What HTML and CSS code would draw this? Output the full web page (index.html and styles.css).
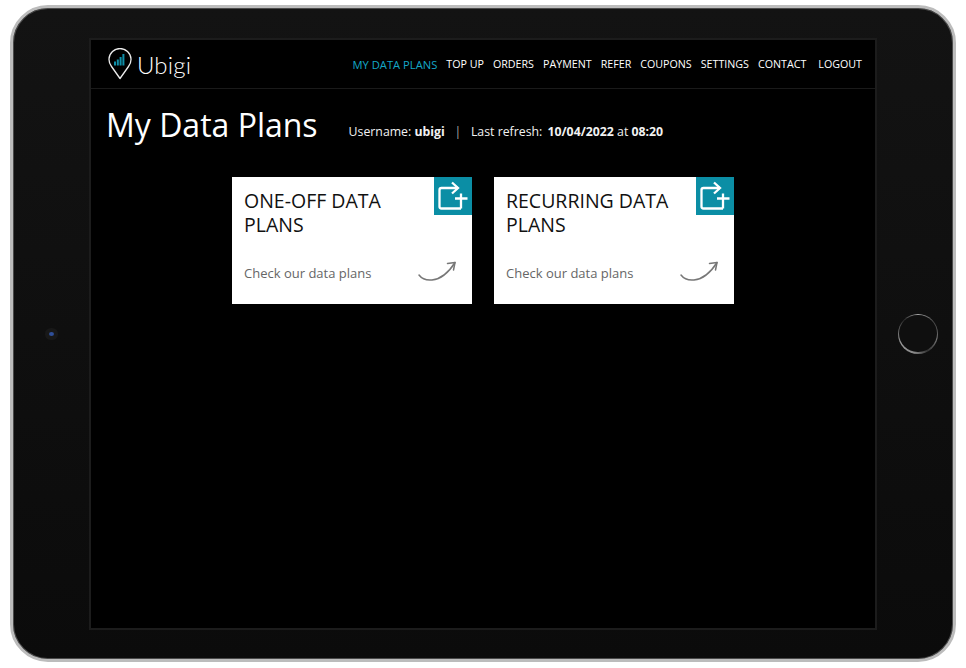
FILE: index.html
```html
<!DOCTYPE html>
<html lang="en">
<head>
  <meta charset="UTF-8" />
  <meta name="viewport" content="width=device-width, initial-scale=1.0" />
  <title>Ubigi - My Data Plans</title>
  <link rel="stylesheet" href="styles.css">
</head>
<body>
  <div class="tablet">
    <div class="bezel bezel-left">
      <div class="camera"></div>
    </div>

    <div class="screen">
      <header>
        <div class="logo">
          <svg class="logo-pin" width="24" height="32" viewBox="0 0 24 32">
            <path d="M12 30.500 L3.500 18.500 A11 11 0 1 1 20.500 18.500 Z" fill="none" stroke="#ececec" stroke-width="1.300" stroke-linejoin="round"/>
            <rect class="bar" x="6" y="13.500" width="2" height="4"/>
            <rect class="bar" x="8.800" y="11.500" width="2" height="6"/>
            <rect class="bar" x="11.600" y="9" width="2" height="8.500"/>
            <rect class="bar" x="14.400" y="6" width="2" height="11.500"/>
          </svg>
          <span class="logo-text">Ubigi</span>
        </div>
        <nav>
          <a class="active" href="#">MY DATA PLANS</a>
          <a href="#">TOP UP</a>
          <a href="#">ORDERS</a>
          <a href="#">PAYMENT</a>
          <a href="#">REFER</a>
          <a href="#">COUPONS</a>
          <a href="#">SETTINGS</a>
          <a href="#">CONTACT</a>
          <a class="logout" href="#">LOGOUT</a>
        </nav>
      </header>

      <div class="page-head">
        <h1>My Data Plans</h1>
        <p class="session">
          Username: <b>ubigi</b>
          <span class="sep">|</span>
          Last refresh: <b class="refresh">10/04/2022</b> at <b>08:20</b>
        </p>
      </div>

      <div class="cards">
        <a class="card" href="#">
          <div class="card-corner">
            <svg width="38" height="38" viewBox="0 0 38 38"><use href="#plan-icon"/></svg>
          </div>
          <h2>ONE-OFF DATA PLANS</h2>
          <div class="card-foot">
            <span>Check our data plans</span>
            <svg width="40" height="24" viewBox="0 0 40 24"><use href="#swoosh"/></svg>
          </div>
        </a>
        <a class="card" href="#">
          <div class="card-corner">
            <svg width="38" height="38" viewBox="0 0 38 38"><use href="#plan-icon"/></svg>
          </div>
          <h2>RECURRING DATA PLANS</h2>
          <div class="card-foot">
            <span>Check our data plans</span>
            <svg width="40" height="24" viewBox="0 0 40 24"><use href="#swoosh"/></svg>
          </div>
        </a>
      </div>
    </div>

    <div class="bezel bezel-right">
      <div class="home-button"></div>
    </div>
  </div>

  <svg class="defs" width="0" height="0">
    <defs>
      <g id="plan-icon" fill="none" stroke="#fff" stroke-width="2.300">
        <path d="M24 11 H7.500 A2 2 0 0 0 5.500 13 V29.500 A2 2 0 0 0 7.500 31.500 H27"/>
        <path d="M18 5.500 L24 11 L18 16.500"/>
        <path d="M21 21.500 H33.500 M27 16.500 V31.500"/>
      </g>
      <g id="swoosh" fill="none" stroke="#777" stroke-width="1.500" stroke-linecap="round" stroke-linejoin="round">
        <path d="M2 17 C5 21 10 22.500 15 22 C24 21 32 14 38 4.500"/>
        <path d="M30.500 5.500 L38 4.500 L36.500 12"/>
      </g>
    </defs>
  </svg>
</body>
</html>
```

FILE: styles.css
```css
*{
  margin:0;
  padding:0;
  box-sizing: border-box;
}
html,body{
  height:100%;
  width:100%;
}
body {
  font-family: "Open Sans", "Liberation Sans", sans-serif;
  background-color: #fff;
  overflow: hidden;
}
.defs {
  position: absolute;
}
.tablet {
  width: 946px;
  height: 657px;
  margin: 5px 10px;
  background: linear-gradient(#131313, #0b0b0b);
  border: 3px solid #bcbcbc;
  border-radius: 38px;
  display: flex;
  padding: 30px 0 29px;
  box-shadow: inset 0 0 0 1px #4a4a4a;
}
.bezel {
  display: flex;
  align-items: center;
  justify-content: center;
  padding-bottom: 1px;
}
.bezel-left {
  width: 76px;
}
.bezel-right {
  width: 76px;
  padding-left: 6px;
}
.camera {
  width: 5px;
  height: 4px;
  background-color: #2f4f9a;
  border-radius: 50%;
  box-shadow: 0 0 0 4px #181818;
}
.home-button {
  width: 40px;
  height: 40px;
  border-radius: 50%;
  background: conic-gradient(#aaa 0deg, #444 55deg, #777 105deg, #333 150deg, #888 190deg, #999 240deg, #777 270deg, #2a2a2a 315deg, #aaa 360deg);
  display: flex;
  align-items: center;
  justify-content: center;
}
.home-button::after {
  content: "";
  width: 37.500px;
  height: 37.500px;
  border-radius: 50%;
  background-color: #0f0f0f;
}
.screen {
  width: 788px;
  background-color: #000;
  border: 2px solid #1c1c1c;
  color: #fff;
}
header {
  height: 49px;
  border-bottom: 1px solid #1a1a1a;
  display: flex;
  justify-content: space-between;
  align-items: center;
  padding: 0 13px 0 17px;
}
.logo {
  display: flex;
  align-items: center;
  gap: 5px;
}
.logo-text {
  font-family: Lato, sans-serif;
  font-size: 24px;
  font-weight: 300;
  letter-spacing: 0.2px;
  color: #fff;
}
.bar {
  fill: #0f8fa8;
}
nav {
  display: flex;
  gap: 9px;
}
nav a {
  color: #fff;
  text-decoration: none;
  font-size: 10.700px;
  line-height: 15px;
}
nav a.active {
  color: #14a7c7;
  font-size: 11.200px;
  font-weight: 500;
}
nav a.logout {
  margin-left: 3px;
}
.page-head {
  display: flex;
  align-items: center;
  padding: 14px 0 0 15px;
}
h1 {
  font-size: 32px;
  font-weight: 400;
}
.session {
  font-size: 12.300px;
  margin: 14px 0 0 31px;
  color: #f2f2f2;
}
.sep {
  color: #aaa;
  margin: 0 6.500px;
}
.refresh {
  margin-left: 2px;
}
.cards {
  display: flex;
  justify-content: center;
  gap: 22px;
  margin-top: 31px;
}
.card {
  position: relative;
  width: 240px;
  height: 127px;
  background-color: #fff;
  color: #111;
  text-decoration: none;
  padding: 12px 15px 0 12px;
  display: flex;
  flex-direction: column;
  justify-content: space-between;
}
.card h2 {
  font-size: 19.500px;
  line-height: 24px;
  font-weight: 400;
  width: 170px;
}
.card-corner {
  position: absolute;
  top: 0;
  right: 0;
  width: 38px;
  height: 38px;
  background-color: #0b8ea5;
}
.card-foot {
  display: flex;
  justify-content: space-between;
  align-items: flex-end;
  color: #666;
  font-size: 13px;
  padding-bottom: 22px;
}
```
